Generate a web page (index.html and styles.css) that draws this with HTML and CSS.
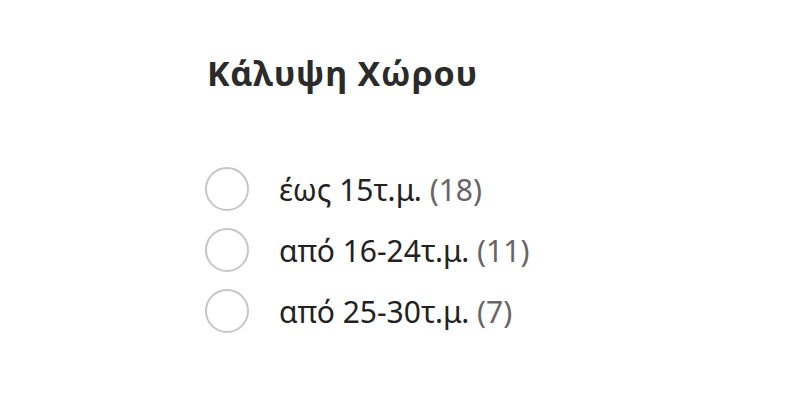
FILE: index.html
```html
<!DOCTYPE html>
<html lang="el">
<head>
<meta charset="utf-8">
<link rel="stylesheet" href="styles.css">
</head>
<body>
<section class="filter">
  <h2 class="filter-title">Κάλυψη Χώρου</h2>
  <ul class="options">
    <li class="option"><span class="radio"></span><span class="label">έως 15τ.μ. <span class="count">(18)</span></span></li>
    <li class="option"><span class="radio"></span><span class="label">από 16-24τ.μ. <span class="count">(11)</span></span></li>
    <li class="option"><span class="radio"></span><span class="label">από 25-30τ.μ. <span class="count">(7)</span></span></li>
  </ul>
</section>
</body>
</html>
```
FILE: styles.css
```css
html, body {
  margin: 0;
  background: #fff;
}
body {
  width: 800px;
  height: 400px;
  overflow: hidden;
  font-family: "Noto Sans", "Open Sans", sans-serif;
}
.filter {
  padding: 51px 0 0 205px;
}
.filter-title {
  margin: 0 0 0 2px;
  font-size: 34px;
  line-height: 44px;
  font-weight: 700;
  letter-spacing: 0.8px;
  color: #2b2b2b;
}
.options {
  list-style: none;
  margin: 72px 0 0;
  padding: 0;
  display: flex;
  flex-direction: column;
  gap: 17px;
}
.option {
  display: flex;
  align-items: center;
  height: 44px;
}
.radio {
  width: 40px;
  height: 40px;
  border: 2px solid #c6c6c6;
  border-radius: 50%;
  flex: none;
}
.label {
  margin-left: 30px;
  font-size: 30px;
  color: #222;
}
.count {
  color: #666;
}
```
